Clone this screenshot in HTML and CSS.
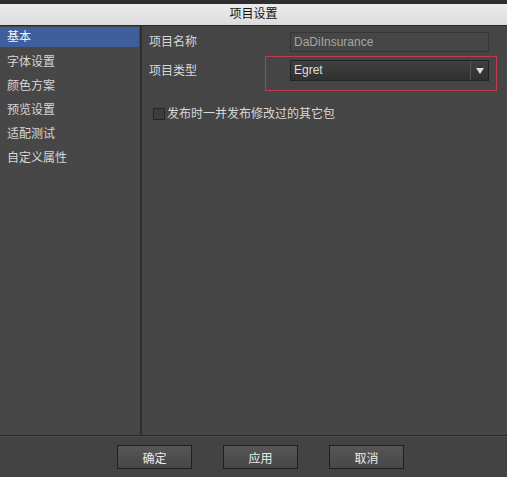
FILE: index.html
```html
<!DOCTYPE html>
<html lang="zh">
<head>
<meta charset="utf-8">
<title>项目设置</title>
<link rel="stylesheet" href="styles.css">
</head>
<body>
<div class="window">
  <div class="topstrip"></div>
  <div class="titlebar">项目设置</div>
  <div class="main">
    <ul class="sidebar">
      <li class="item selected">基本</li>
      <li class="item">字体设置</li>
      <li class="item">颜色方案</li>
      <li class="item">预览设置</li>
      <li class="item">适配测试</li>
      <li class="item">自定义属性</li>
    </ul>
    <div class="panel">
      <div class="form">
        <div class="label">项目名称</div>
        <div class="input">DaDiInsurance</div>
        <div class="label">项目类型</div>
        <div class="select"><span class="select-text">Egret</span><span class="select-btn"><span class="arrow"></span></span></div>
      </div>
      <label class="check"><span class="box"></span>发布时一并发布修改过的其它包</label>
      <div class="highlight"></div>
    </div>
  </div>
  <div class="footer">
    <button class="btn">确定</button>
    <button class="btn">应用</button>
    <button class="btn">取消</button>
  </div>
</div>
</body>
</html>
```

FILE: styles.css
```css
* { box-sizing: border-box; }
html, body { margin: 0; padding: 0; }
body {
  width: 507px;
  height: 477px;
  overflow: hidden;
  background: #444444;
  font-family: "Liberation Sans", "Noto Sans CJK SC", sans-serif;
  font-size: 12px;
  color: #dcdcdc;
}
.window { width: 507px; height: 477px; display: flex; flex-direction: column; }
.topstrip {
  height: 4px;
  background: #2f2f2f;
}
.titlebar {
  height: 22px;
  background: linear-gradient(#ececec, #dcdcdc);
  border-bottom: 1px solid #2a2a2a;
  color: #111;
  text-align: center;
  line-height: 21px;
  font-size: 12px;
}
.main {
  height: 410px;
  display: flex;
  border-bottom: 1px solid #2a2a2a;
}
.sidebar {
  list-style: none;
  margin: 0;
  padding: 1px 0 0;
  width: 142px;
  background: #474747;
  border-right: 2px solid #2e2e2e;
  display: flex;
  flex-direction: column;
  gap: 4px;
}
.item {
  height: 20px;
  line-height: 23px;
  margin-right: 1px;
  padding-left: 7px;
  color: #d6d6d6;
}
.item.selected {
  line-height: 21px;
  background: #3f5f9c;
  color: #f2f2f2;
}
.panel {
  flex: 1;
  position: relative;
  background: #454545;
  padding: 6px 17px 0 7px;
}
.form {
  display: grid;
  grid-template-columns: 141px 199px;
  grid-template-rows: 20px 21px;
  row-gap: 8px;
  align-items: center;
}
.label { color: #d8d8d8; line-height: 20px; }
.input {
  height: 20px;
  line-height: 18px;
  padding-left: 3px;
  background: #464646;
  border: 1px solid #363636;
  color: #a6a6a6;
}
.select {
  height: 21px;
  display: flex;
  background: linear-gradient(#3f3f3f, #303030);
  border: 1px solid #232323;
}
.select-text {
  flex: 1;
  line-height: 19px;
  padding-left: 3px;
  color: #dedede;
}
.select-btn {
  width: 18px;
  border-left: 1px solid #555;
  display: flex;
  align-items: center;
  justify-content: center;
}
.arrow {
  width: 0; height: 0;
  border-left: 4px solid transparent;
  border-right: 4px solid transparent;
  border-top: 6px solid #dcdcdc;
}
.check {
  display: flex;
  align-items: center;
  margin-top: 23px;
  padding-left: 4px;
  color: #d8d8d8;
  line-height: 20px;
}
.box {
  width: 12px; height: 12px;
  background: #3d3d3d;
  border: 1px solid #262626;
  margin-right: 2px;
}
.highlight {
  position: absolute;
  left: 123px;
  top: 30px;
  width: 232px;
  height: 35px;
  border: 1px solid #c23a4c;
  pointer-events: none;
}
.footer {
  flex: 1;
  background: #434343;
  border-top: 1px solid #4e4e4e;
  display: flex;
  justify-content: center;
  align-items: flex-start;
  gap: 31px;
  padding: 8px 0 0 14px;
}
.btn {
  width: 75px;
  height: 24px;
  font-family: "Liberation Sans", "Noto Sans CJK SC", sans-serif;
  font-size: 12px;
  color: #ececec;
  background: linear-gradient(#565656, #474747);
  border: 1px solid #1f1f1f;
  padding: 0;
}
```
